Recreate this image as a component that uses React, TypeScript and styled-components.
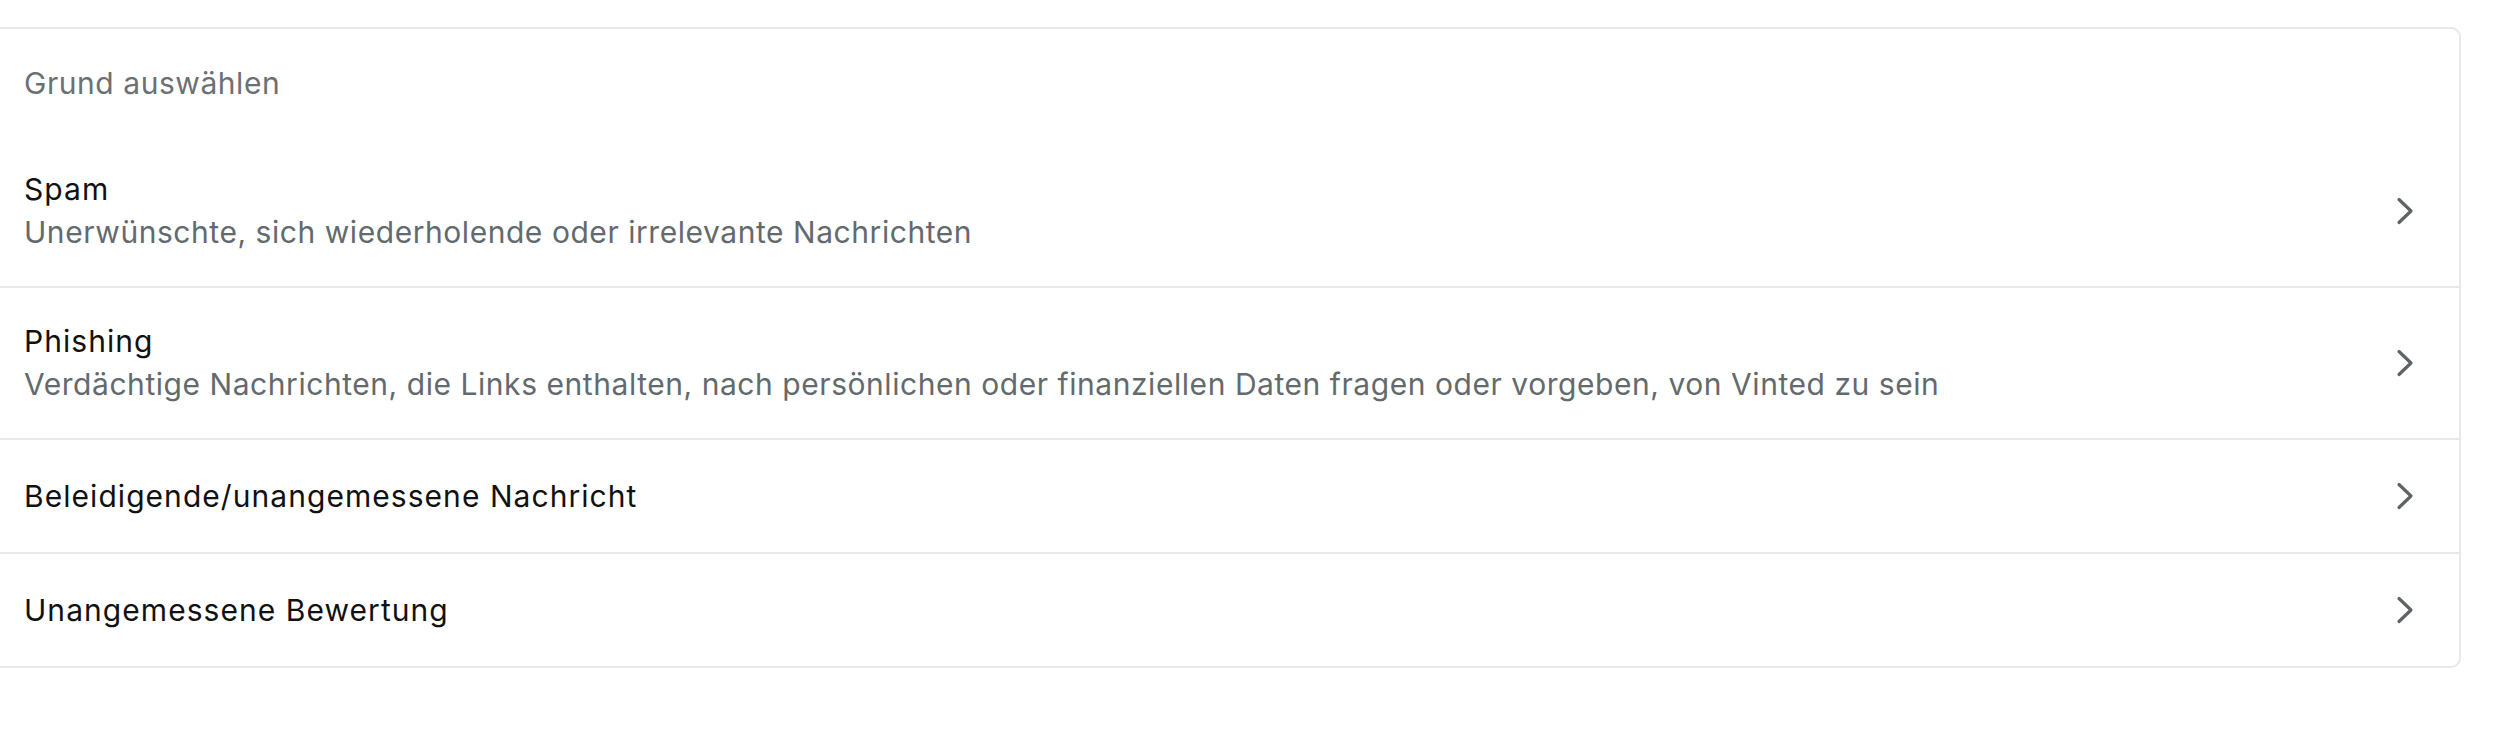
import React from "react";
import styled, { createGlobalStyle } from "styled-components";

const Global = createGlobalStyle`
  html, body {
    margin: 0;
    padding: 0;
    background: #ffffff;
    font-family: Inter, "Noto Sans", "Liberation Sans", sans-serif;
    -webkit-font-smoothing: antialiased;
  }
`;

const Page = styled.div`
  padding-top: 27px;
  width: 2499px;
  overflow: hidden;
`;

const Card = styled.section`
  margin-left: -10px;
  width: 2471px;
  box-sizing: border-box;
  border: 2px solid #e8e8e8;
  border-radius: 10px;
  background: #ffffff;
  overflow: hidden;
`;

const Header = styled.div`
  padding: 32px 32px 31px 32px;
  font-size: 30px;
  letter-spacing: 0.55px;
  line-height: 44px;
  color: #6b7073;
`;

const Row = styled.div<{ $last?: boolean }>`
  display: flex;
  align-items: center;
  gap: 24px;
  padding: 32px 38px 32px 32px;
  border-bottom: ${(p) => (p.$last ? "none" : "2px solid #e8e8e8")};
`;

const Body = styled.div`
  flex: 1;
  display: flex;
  flex-direction: column;
`;

const Title = styled.div<{ $single?: boolean }>`
  font-size: 30px;
  letter-spacing: 1.05px;
  font-weight: 430;
  line-height: ${(p) => (p.$single ? "48px" : "42px")};
  color: #111111;
`;

const Subtitle = styled.div`
  font-size: 30px;
  letter-spacing: 0.55px;
  line-height: 44px;
  color: #636a6e;
`;

const Chevron = styled.svg`
  width: 32px;
  height: 32px;
  flex: none;
`;

const ChevronIcon = () => (
  <Chevron viewBox="0 0 32 32" fill="none">
    <polyline
      points="10,4.5 22,16 10,27.5"
      stroke="#5e6366"
      strokeWidth="3.2"
      strokeLinecap="round"
      strokeLinejoin="round"
    />
  </Chevron>
);

type Item = { title: string; subtitle?: string };

const items: Item[] = [
  { title: "Spam", subtitle: "Unerwünschte, sich wiederholende oder irrelevante Nachrichten" },
  {
    title: "Phishing",
    subtitle:
      "Verdächtige Nachrichten, die Links enthalten, nach persönlichen oder finanziellen Daten fragen oder vorgeben, von Vinted zu sein",
  },
  { title: "Beleidigende/unangemessene Nachricht" },
  { title: "Unangemessene Bewertung" },
];

export default function App() {
  return (
    <>
      <Global />
      <Page>
        <Card>
          <Header>Grund auswählen</Header>
          {items.map((it, i) => (
            <Row key={it.title} $last={i === items.length - 1}>
              <Body>
                <Title $single={!it.subtitle}>{it.title}</Title>
                {it.subtitle && <Subtitle>{it.subtitle}</Subtitle>}
              </Body>
              <ChevronIcon />
            </Row>
          ))}
        </Card>
      </Page>
    </>
  );
}
